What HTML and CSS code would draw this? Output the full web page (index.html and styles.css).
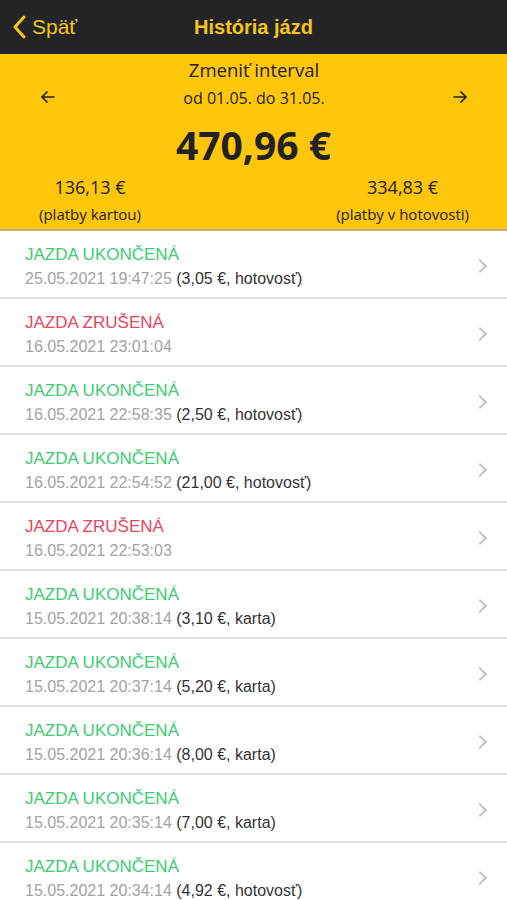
FILE: index.html
```html
<!DOCTYPE html>
<html lang="sk">
<head>
<meta charset="utf-8">
<title>História jázd</title>
<link rel="stylesheet" href="styles.css">
</head>
<body>
<div class="app">
  <header class="topbar">
    <a class="back" href="#">
      <svg class="back-icon" viewBox="0 0 14 24" width="14" height="24"><path d="M12 2 L3 12 L12 22" fill="none" stroke="#f5c518" stroke-width="3" stroke-linecap="round" stroke-linejoin="round"/></svg>
      <span>Späť</span>
    </a>
    <h1 class="title">História jázd</h1>
  </header>

  <section class="summary">
    <div class="interval">
      <svg class="arrow" viewBox="0 0 16 16" width="16" height="16"><path d="M14.5 8 H2 M7.5 2.5 L2 8 L7.5 13.5" fill="none" stroke="#222" stroke-width="1.7"/></svg>
      <div class="interval-text">
        <div class="interval-label">Zmeniť interval</div>
        <div class="interval-range">od 01.05. do 31.05.</div>
      </div>
      <svg class="arrow" viewBox="0 0 16 16" width="16" height="16"><path d="M1.5 8 H14 M8.5 2.5 L14 8 L8.5 13.5" fill="none" stroke="#222" stroke-width="1.7"/></svg>
    </div>
    <div class="total">470,96 €</div>
    <div class="split">
      <div class="split-item left">
        <div class="split-amount">136,13 €</div>
        <div class="split-label">(platby kartou)</div>
      </div>
      <div class="split-item right">
        <div class="split-amount">334,83 €</div>
        <div class="split-label">(platby v hotovosti)</div>
      </div>
    </div>
  </section>

  <ul class="rides">
    <li class="ride"><div class="ride-info"><div class="status done">JAZDA UKONČENÁ</div><div class="meta"><span class="time">25.05.2021 19:47:25</span> <span class="pay">(3,05 €, hotovosť)</span></div></div><span class="chev"></span></li>
    <li class="ride"><div class="ride-info"><div class="status cancel">JAZDA ZRUŠENÁ</div><div class="meta"><span class="time">16.05.2021 23:01:04</span></div></div><span class="chev"></span></li>
    <li class="ride"><div class="ride-info"><div class="status done">JAZDA UKONČENÁ</div><div class="meta"><span class="time">16.05.2021 22:58:35</span> <span class="pay">(2,50 €, hotovosť)</span></div></div><span class="chev"></span></li>
    <li class="ride"><div class="ride-info"><div class="status done">JAZDA UKONČENÁ</div><div class="meta"><span class="time">16.05.2021 22:54:52</span> <span class="pay">(21,00 €, hotovosť)</span></div></div><span class="chev"></span></li>
    <li class="ride"><div class="ride-info"><div class="status cancel">JAZDA ZRUŠENÁ</div><div class="meta"><span class="time">16.05.2021 22:53:03</span></div></div><span class="chev"></span></li>
    <li class="ride"><div class="ride-info"><div class="status done">JAZDA UKONČENÁ</div><div class="meta"><span class="time">15.05.2021 20:38:14</span> <span class="pay">(3,10 €, karta)</span></div></div><span class="chev"></span></li>
    <li class="ride"><div class="ride-info"><div class="status done">JAZDA UKONČENÁ</div><div class="meta"><span class="time">15.05.2021 20:37:14</span> <span class="pay">(5,20 €, karta)</span></div></div><span class="chev"></span></li>
    <li class="ride"><div class="ride-info"><div class="status done">JAZDA UKONČENÁ</div><div class="meta"><span class="time">15.05.2021 20:36:14</span> <span class="pay">(8,00 €, karta)</span></div></div><span class="chev"></span></li>
    <li class="ride"><div class="ride-info"><div class="status done">JAZDA UKONČENÁ</div><div class="meta"><span class="time">15.05.2021 20:35:14</span> <span class="pay">(7,00 €, karta)</span></div></div><span class="chev"></span></li>
    <li class="ride"><div class="ride-info"><div class="status done">JAZDA UKONČENÁ</div><div class="meta"><span class="time">15.05.2021 20:34:14</span> <span class="pay">(4,92 €, hotovosť)</span></div></div><span class="chev"></span></li>
  </ul>
</div>
</body>
</html>
```
FILE: styles.css
```css
* { box-sizing: border-box; }
html, body { margin: 0; padding: 0; }
body {
  background: #ffffff;
  font-family: "Liberation Sans", Arial, sans-serif;
  overflow: hidden;
}
.app { width: 507px; }

.topbar {
  height: 54px;
  background: #232428;
  display: grid;
  grid-template-columns: 1fr auto 1fr;
  align-items: center;
}
.back {
  display: flex;
  align-items: center;
  gap: 6px;
  padding-left: 12px;
  color: #f5c518;
  text-decoration: none;
  font-size: 21px;
}
.back-icon { display: block; }
.title {
  margin: 0;
  font-size: 20px;
  font-weight: bold;
  color: #f5c518;
}

.summary {
  background: #ffc60a;
  border-bottom: 2px solid #c2ad74;
  height: 177px;
  padding-top: 4px;
  color: #222;
  font-family: "Open Sans", "Noto Sans", sans-serif;
}
.interval {
  display: flex;
  align-items: flex-start;
  justify-content: space-between;
  padding: 0 39px 0 40px;
}
.arrow { display: block; margin-top: 31px; }
.interval-text { text-align: center; }
.interval-label { font-size: 18.5px; line-height: 24px; }
.interval-range { font-size: 16px; line-height: 22px; margin-top: 5px; }
.total {
  text-align: center;
  font-size: 39px;
  font-weight: bold;
  line-height: 46px;
  margin-top: 13px;
}
.split {
  display: flex;
  justify-content: space-between;
  padding: 0 38px 0 39px;
  margin-top: 7px;
}
.split-item { text-align: center; }
.split-amount { font-size: 18px; line-height: 24px; }
.split-label { font-size: 15px; line-height: 22px; margin-top: 4px; }

.rides { list-style: none; margin: 0; padding: 0; }
.ride {
  height: 68px;
  border-bottom: 2px solid #e4e4e4;
  display: flex;
  align-items: center;
  padding: 4px 20px 0 25px;
}
.ride-info { flex: 1; }
.status { font-size: 17px; line-height: 22px; }
.status.done { color: #3dcc73; }
.status.cancel { color: #e8455f; }
.meta { font-size: 16px; line-height: 20px; margin-top: 3px; }
.time { color: #a3a3a3; }
.pay { color: #333; }
.chev {
  width: 10px;
  height: 10px;
  border-right: 2px solid #c3c3c3;
  border-top: 2px solid #c3c3c3;
  transform: rotate(45deg);
  margin-right: 2px;
}
```
